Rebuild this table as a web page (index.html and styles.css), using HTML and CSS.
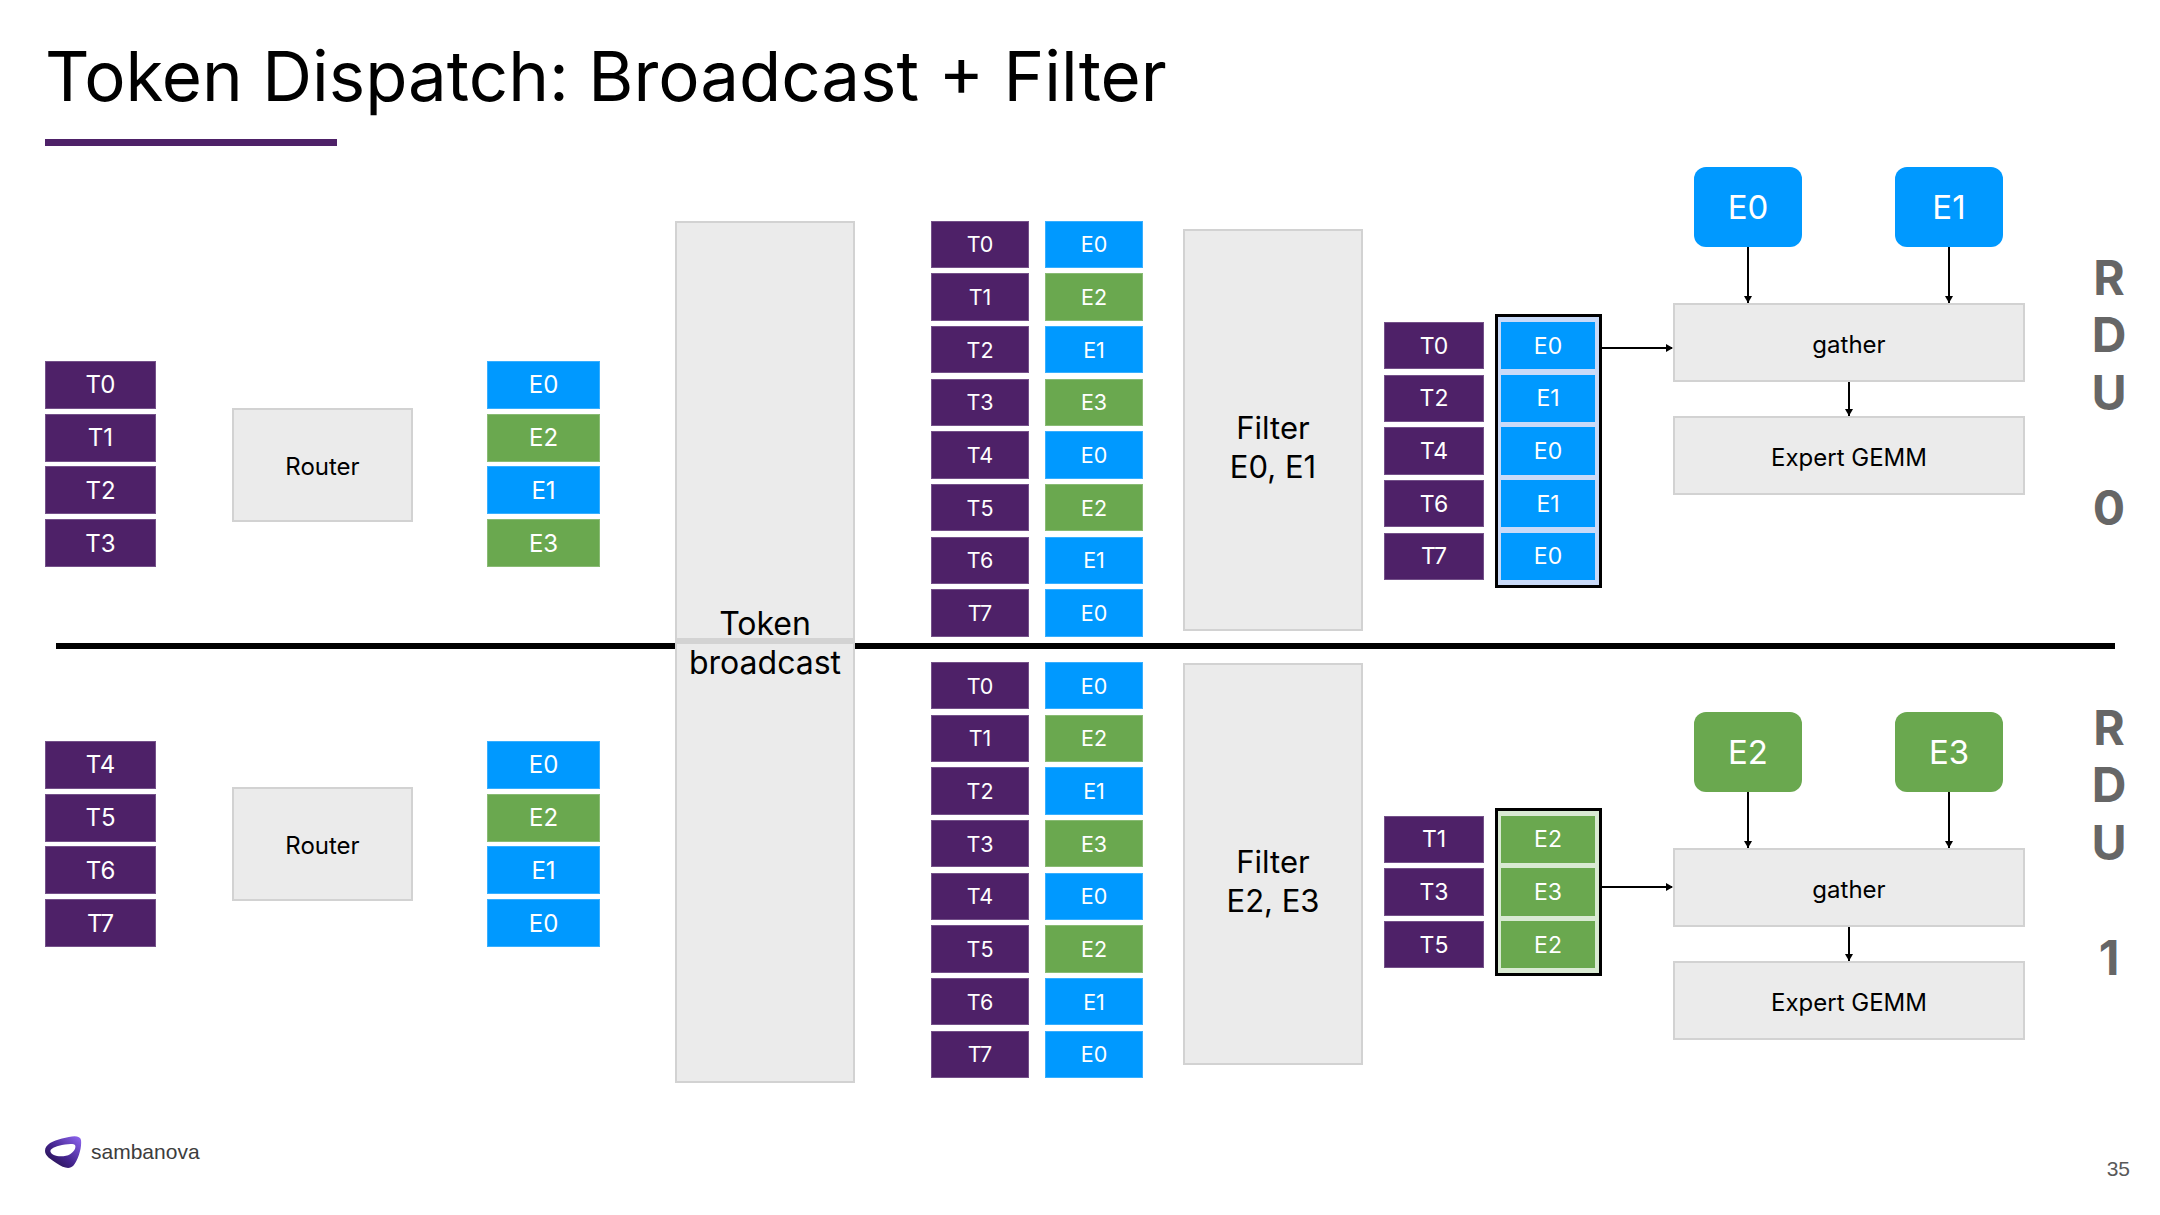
FILE: index.html
```html
<!DOCTYPE html>
<html lang="en">
<head>
<meta charset="utf-8">
<title>Token Dispatch: Broadcast + Filter</title>
<link rel="stylesheet" href="styles.css">
</head>
<body>
<div class="slide">
  <h1 class="title">Token Dispatch: Broadcast + Filter</h1>
  <div class="title-bar"></div>

  <div class="diagram">
    <!-- top half: RDU 0 -->
    <div class="stack lg c1 r1 m-in-top">
      <div class="blk tok">T0</div><div class="blk tok">T1</div><div class="blk tok">T2</div><div class="blk tok">T3</div>
    </div>
    <div class="box router c3 r1 m-router-top">Router</div>
    <div class="stack lg c5 r1 m-in-top">
      <div class="blk eb">E0</div><div class="blk eg">E2</div><div class="blk eb">E1</div><div class="blk eg">E3</div>
    </div>

    <div class="box bcast">Token<br>broadcast</div>

    <div class="stack md c9 r1 m-mid-top">
      <div class="blk tok">T0</div><div class="blk tok">T1</div><div class="blk tok">T2</div><div class="blk tok">T3</div>
      <div class="blk tok">T4</div><div class="blk tok">T5</div><div class="blk tok">T6</div><div class="blk tok">T7</div>
    </div>
    <div class="stack md c11 r1 m-mid-top">
      <div class="blk eb">E0</div><div class="blk eg">E2</div><div class="blk eb">E1</div><div class="blk eg">E3</div>
      <div class="blk eb">E0</div><div class="blk eg">E2</div><div class="blk eb">E1</div><div class="blk eb">E0</div>
    </div>
    <div class="box filter c13 r1 m-filter-top">Filter<br>E0, E1</div>
    <div class="stack sm c15 r1 m-ft-top">
      <div class="blk tok">T0</div><div class="blk tok">T2</div><div class="blk tok">T4</div><div class="blk tok">T6</div><div class="blk tok">T7</div>
    </div>
    <div class="group group-blue c17 r1 m-grp-top">
      <div class="blk eb">E0</div><div class="blk eb">E1</div><div class="blk eb">E0</div><div class="blk eb">E1</div><div class="blk eb">E0</div>
    </div>
    <div class="harrow c18 r1 m-ha-top"></div>
    <div class="flow c19 r1">
      <div class="experts">
        <div class="expert"><div class="ebox eb">E0</div><div class="stem tall"></div></div>
        <div class="expert"><div class="ebox eb">E1</div><div class="stem tall"></div></div>
      </div>
      <div class="box gbox">gather</div>
      <div class="stem short"></div>
      <div class="box gbox">Expert GEMM</div>
    </div>
    <div class="rdu c21 r1 m-rdu-top">R<br>D<br>U<br><br>0</div>

    <div class="divider"></div>

    <!-- bottom half: RDU 1 -->
    <div class="stack lg c1 r3 m-in-bot">
      <div class="blk tok">T4</div><div class="blk tok">T5</div><div class="blk tok">T6</div><div class="blk tok">T7</div>
    </div>
    <div class="box router c3 r3 m-router-bot">Router</div>
    <div class="stack lg c5 r3 m-in-bot">
      <div class="blk eb">E0</div><div class="blk eg">E2</div><div class="blk eb">E1</div><div class="blk eb">E0</div>
    </div>
    <div class="stack md c9 r3 m-mid-bot">
      <div class="blk tok">T0</div><div class="blk tok">T1</div><div class="blk tok">T2</div><div class="blk tok">T3</div>
      <div class="blk tok">T4</div><div class="blk tok">T5</div><div class="blk tok">T6</div><div class="blk tok">T7</div>
    </div>
    <div class="stack md c11 r3 m-mid-bot">
      <div class="blk eb">E0</div><div class="blk eg">E2</div><div class="blk eb">E1</div><div class="blk eg">E3</div>
      <div class="blk eb">E0</div><div class="blk eg">E2</div><div class="blk eb">E1</div><div class="blk eb">E0</div>
    </div>
    <div class="box filter c13 r3 m-filter-bot">Filter<br>E2, E3</div>
    <div class="stack sm c15 r3 m-ft-bot">
      <div class="blk tok">T1</div><div class="blk tok">T3</div><div class="blk tok">T5</div>
    </div>
    <div class="group group-green c17 r3 m-grp-bot">
      <div class="blk eg">E2</div><div class="blk eg">E3</div><div class="blk eg">E2</div>
    </div>
    <div class="harrow c18 r3 m-ha-bot"></div>
    <div class="flow c19 r3 m-flow-bot">
      <div class="experts">
        <div class="expert"><div class="ebox eg">E2</div><div class="stem tall"></div></div>
        <div class="expert"><div class="ebox eg">E3</div><div class="stem tall"></div></div>
      </div>
      <div class="box gbox">gather</div>
      <div class="stem short"></div>
      <div class="box gbox">Expert GEMM</div>
    </div>
    <div class="rdu c21 r3 m-rdu-bot">R<br>D<br>U<br><br>1</div>
  </div>

  <div class="footer">
    <div class="brand">
      <svg class="logo-mark" viewBox="0 0 38 34" width="38" height="34" aria-hidden="true">
        <defs>
          <linearGradient id="lgm" x1="0" y1="1" x2="1" y2="0">
            <stop offset="0" stop-color="#1c0d38"/>
            <stop offset="0.45" stop-color="#44248e"/>
            <stop offset="1" stop-color="#9168f4"/>
          </linearGradient>
        </defs>
        <path fill="url(#lgm)" fill-rule="evenodd" d="M1 16 C1 9 9 6 18 3.5 C28 0.6 36 -0.4 37 5 C38 13 34 25 29.5 30.5 C25.5 35 19 32.5 13 28.5 C7 24.5 1 21 1 16 Z M6.5 16.8 C7.2 19.8 14 22.6 22 20.8 C29 19 32.2 13.2 31.2 10.6 C30.2 8 22 9 15 10.8 C9 12.5 6 14.2 6.5 16.8 Z"/>
      </svg>
      <span class="brand-name">sambanova</span>
    </div>
    <div class="pagenum">35</div>
  </div>
</div>
</body>
</html>
```

FILE: styles.css
```css
html, body {
  margin: 0;
  padding: 0;
  background: #ffffff;
}

body {
  width: 2160px;
  height: 1215px;
  overflow: hidden;
  font-family: Inter, "Noto Sans", "Liberation Sans", sans-serif;
  color: #000;
}

.slide {
  width: 2160px;
  height: 1215px;
  box-sizing: border-box;
  padding: 40.6px 30px 0 45px;
  display: flex;
  flex-direction: column;
}

.title {
  margin: 0;
  font-size: 69px;
  line-height: 70px;
  font-weight: 400;
  color: #000;
}

.title-bar {
  width: 292px;
  height: 7px;
  margin-top: 28.4px;
  background: #4e2168;
}

/* ---------- diagram grid ---------- */
.diagram {
  margin-top: 21px;
  display: grid;
  grid-template-columns: 111px 76px 181px 74px 113px 75px 180px 76px 98px 16px 98px 40px 180px 21px 100px 11px 107px 71px 352px 70px 35px;
  grid-template-rows: 476px 6px 434px;
  align-items: start;
}

.r1 { grid-row: 1; }
.r3 { grid-row: 3; }
.c1 { grid-column: 1; }
.c3 { grid-column: 3; }
.c5 { grid-column: 5; }
.c9 { grid-column: 9; }
.c11 { grid-column: 11; }
.c13 { grid-column: 13; }
.c15 { grid-column: 15; }
.c17 { grid-column: 17; }
.c18 { grid-column: 18; }
.c19 { grid-column: 19; }
.c21 { grid-column: 21; }

/* vertical offsets within each half */
.m-in-top { margin-top: 194px; }
.m-in-bot { margin-top: 92px; }
.m-router-top { margin-top: 241px; }
.m-router-bot { margin-top: 138px; }
.m-mid-top { margin-top: 53.7px; }
.m-mid-bot { margin-top: 13px; }
.m-filter-top { margin-top: 62px; }
.m-filter-bot { margin-top: 14px; }
.m-ft-top { margin-top: 155px; }
.m-ft-bot { margin-top: 166.7px; }
.m-grp-top { margin-top: 147px; }
.m-grp-bot { margin-top: 158.7px; }
.m-ha-top { margin-top: 180.3px; }
.m-ha-bot { margin-top: 237.3px; }
.m-flow-bot { margin-top: 63px; }
.m-rdu-top { margin-top: 82px; }
.m-rdu-bot { margin-top: 50px; }

/* ---------- stacks of token / expert cells ---------- */
.stack {
  display: flex;
  flex-direction: column;
  gap: 5.17px;
}

.blk {
  height: 47.5px;
  display: flex;
  align-items: center;
  justify-content: center;
  color: #ffffff;
  box-sizing: border-box;
  box-shadow: inset 0 0 0 1px rgba(255, 255, 255, 0.22);
}

.stack.lg { gap: 4.7px; }
.stack.lg .blk { height: 48px; font-size: 24px; }
.stack.md .blk { font-size: 21.5px; }
.stack.sm .blk { font-size: 23px; }
.group .blk { font-size: 23px; }

.tok { background: #4e2168; }
.eb { background: #0099ff; }
.eg { background: #6aa84f; }

/* ---------- gray process boxes ---------- */
.box {
  background: #ebebeb;
  border: 2px solid #d2d2d2;
  box-sizing: border-box;
  display: flex;
  align-items: center;
  justify-content: center;
  text-align: center;
  color: #000;
}

.router {
  height: 114px;
  font-size: 24px;
  padding-top: 4px;
}

.bcast {
  grid-column: 7;
  grid-row: 1 / 4;
  align-self: stretch;
  margin-top: 54px;
  font-size: 32px;
  line-height: 39px;
  padding-bottom: 18px;
  position: relative;
  z-index: 1;
}

.bcast::before {
  content: "";
  position: absolute;
  left: 0;
  right: 0;
  top: 415px;
  height: 6px;
  background: #d3d3d3;
}

.filter {
  height: 402px;
  font-size: 31px;
  line-height: 39px;
  padding-top: 34px;
}

.divider {
  grid-row: 2;
  grid-column: 1 / -1;
  align-self: stretch;
  margin: 0 15px 0 11px;
  background: #000;
  z-index: 0;
}

/* ---------- filtered expert groups ---------- */
.group {
  border: 3px solid #000;
  padding: 5px 4px 5px 3px;
  display: flex;
  flex-direction: column;
  gap: 5.17px;
}

.group-blue { background: #c9daf8; }
.group-green { background: #d9ead3; }

.group .blk { box-shadow: none; }

/* ---------- arrows ---------- */
.harrow {
  height: 1.5px;
  background: #000;
  position: relative;
  margin-right: 1px;
}

.harrow::after {
  content: "";
  position: absolute;
  right: -1px;
  top: -3.25px;
  border-left: 7px solid #000;
  border-top: 4px solid transparent;
  border-bottom: 4px solid transparent;
}

.stem {
  width: 1.5px;
  background: #000;
  position: relative;
}

.stem::after {
  content: "";
  position: absolute;
  bottom: 0;
  left: -3.25px;
  border-top: 7px solid #000;
  border-left: 4px solid transparent;
  border-right: 4px solid transparent;
}

.stem.tall { height: 56px; }
.stem.short { height: 34px; align-self: center; }

/* ---------- right flow column ---------- */
.flow {
  display: flex;
  flex-direction: column;
}

.experts {
  display: flex;
  gap: 93px;
  padding-left: 21px;
}

.expert {
  width: 108px;
  display: flex;
  flex-direction: column;
  align-items: center;
}

.ebox {
  width: 108px;
  height: 80px;
  border-radius: 12px;
  display: flex;
  align-items: center;
  justify-content: center;
  color: #fff;
  font-size: 33px;
}

.gbox {
  height: 79px;
  font-size: 24px;
  padding-top: 5px;
}

.rdu {
  margin-left: -7px;
  font-weight: 700;
  font-size: 48px;
  line-height: 57.5px;
  color: #666666;
  text-align: center;
}

/* ---------- footer ---------- */
.footer {
  margin-top: 52px;
  display: flex;
  align-items: flex-start;
}

.brand {
  display: flex;
  align-items: center;
  gap: 9px;
  margin-left: -1px;
}

.logo-mark {
  display: block;
}

.brand-name {
  font-family: "Liberation Sans", Arial, sans-serif;
  font-size: 21px;
  color: #3d3d3d;
}

.pagenum {
  margin-left: auto;
  margin-top: 22px;
  font-family: "Liberation Sans", Arial, sans-serif;
  font-size: 21px;
  line-height: 24px;
  color: #595959;
}
```
